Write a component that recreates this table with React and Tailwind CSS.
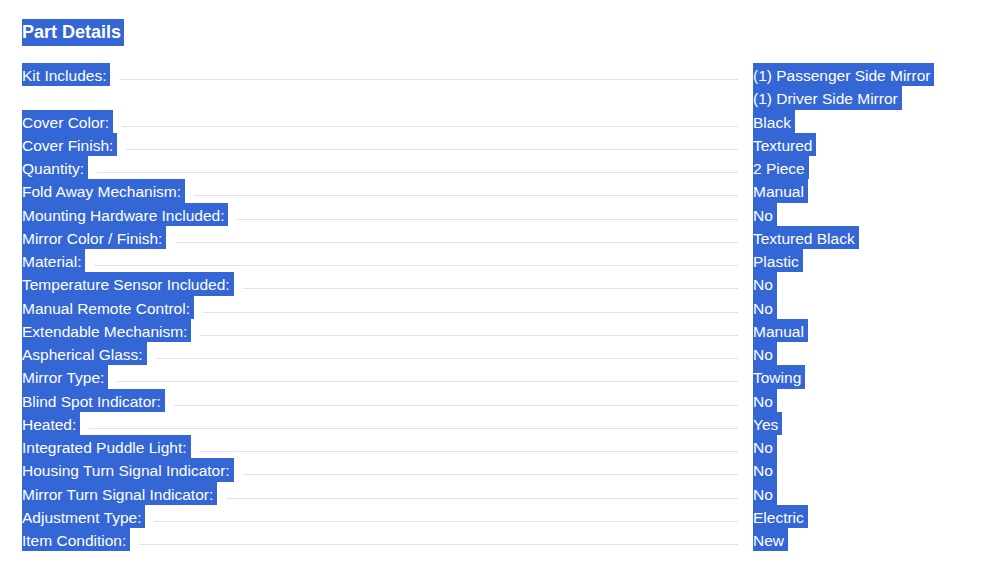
const rows = [
  ["Kit Includes:", ["(1) Passenger Side Mirror", "(1) Driver Side Mirror"]],
  ["Cover Color:", ["Black"]],
  ["Cover Finish:", ["Textured"]],
  ["Quantity:", ["2 Piece"]],
  ["Fold Away Mechanism:", ["Manual"]],
  ["Mounting Hardware Included:", ["No"]],
  ["Mirror Color / Finish:", ["Textured Black"]],
  ["Material:", ["Plastic"]],
  ["Temperature Sensor Included:", ["No"]],
  ["Manual Remote Control:", ["No"]],
  ["Extendable Mechanism:", ["Manual"]],
  ["Aspherical Glass:", ["No"]],
  ["Mirror Type:", ["Towing"]],
  ["Blind Spot Indicator:", ["No"]],
  ["Heated:", ["Yes"]],
  ["Integrated Puddle Light:", ["No"]],
  ["Housing Turn Signal Indicator:", ["No"]],
  ["Mirror Turn Signal Indicator:", ["No"]],
  ["Adjustment Type:", ["Electric"]],
  ["Item Condition:", ["New"]],
];

export default function App() {
  return (
    <div
      className="w-[1000px] h-[565px] bg-white pt-[19px] px-[22px] text-white"
      style={{ fontFamily: '"Liberation Sans", Arial, sans-serif' }}
    >
      <div className="mb-[17px]">
        <span className="inline-block bg-[#3466d6] text-[18px] leading-[27px] font-bold pr-[3px] whitespace-nowrap">
          Part Details
        </span>
      </div>
      <div className="flex flex-col text-[15.5px] leading-[23.25px]">
        {rows.map(([label, values]) => (
          <div key={label} className="flex items-start">
            <div className="flex-1 flex items-start">
              <span className="inline-block bg-[#3466d6] pr-[4px] pt-[1px] whitespace-nowrap h-[23.25px] overflow-hidden">
                {label}
              </span>
              <div className="flex-1 ml-[9px] mr-[15px] h-[17px] border-b border-[#e2e2e2]" />
            </div>
            <div className="w-[225px] flex flex-col items-start">
              {values.map((v) => (
                <span
                  key={v}
                  className="inline-block bg-[#3466d6] pr-[4px] pt-[1px] whitespace-nowrap h-[23.25px] overflow-hidden"
                >
                  {v}
                </span>
              ))}
            </div>
          </div>
        ))}
      </div>
    </div>
  );
}
